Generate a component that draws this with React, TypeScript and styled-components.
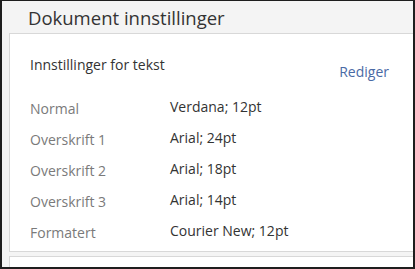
import React from "react";
import styled, { createGlobalStyle } from "styled-components";

const GlobalStyle = createGlobalStyle`
  html, body {
    margin: 0;
    padding: 0;
    background: #ffffff;
  }
  body {
    font-family: "Open Sans", "Noto Sans", sans-serif;
  }
`;

const Frame = styled.div`
  box-sizing: border-box;
  width: 415px;
  height: 269px;
  border: 2px solid #1e1e1e;
  border-top-width: 1px;
  background: #f4f4f4;
  overflow: hidden;
  display: flex;
  flex-direction: column;
`;

const Title = styled.h1`
  margin: 0;
  height: 32px;
  padding-left: 26px;
  font-size: 18.5px;
  font-weight: 400;
  line-height: 33px;
  color: #333333;
  box-sizing: border-box;
`;

const Card = styled.section`
  margin-left: 7px;
  margin-right: -4px;
  background: #ffffff;
  border: 1px solid #d8d8d8;
  padding: 21px 0 0 20px;
  display: flex;
  flex-direction: column;
`;

const SettingsCard = styled(Card)`
  height: 219px;
  box-sizing: border-box;
`;

const NextCard = styled(Card)`
  margin-top: 4px;
  flex: 1;
`;

const CardHead = styled.div`
  display: flex;
  justify-content: space-between;
  padding-right: 27px;
`;

const CardTitle = styled.h2`
  margin: 0;
  font-size: 14px;
  font-weight: 400;
  line-height: 20px;
  color: #333333;
`;

const EditLink = styled.a`
  margin-top: 7px;
  font-size: 14px;
  line-height: 20px;
  color: #4a6aa5;
  text-decoration: none;
  cursor: pointer;
`;

const Rows = styled.dl`
  margin: 15px 0 0;
  display: grid;
  grid-template-columns: 140px 1fr;
  grid-auto-rows: 31px;
`;

const Label = styled.dt`
  margin: 0;
  font-size: 14px;
  line-height: 20px;
  padding-top: 2px;
  color: #7a7a7a;
`;

const Value = styled.dd`
  margin: 0;
  font-size: 14px;
  line-height: 20px;
  color: #333333;
`;

const rows: [string, string][] = [
  ["Normal", "Verdana; 12pt"],
  ["Overskrift 1", "Arial; 24pt"],
  ["Overskrift 2", "Arial; 18pt"],
  ["Overskrift 3", "Arial; 14pt"],
  ["Formatert", "Courier New; 12pt"],
];

export default function App() {
  return (
    <>
      <GlobalStyle />
      <Frame>
        <Title>Dokument innstillinger</Title>
        <SettingsCard>
          <CardHead>
            <CardTitle>Innstillinger for tekst</CardTitle>
            <EditLink>Rediger</EditLink>
          </CardHead>
          <Rows>
            {rows.map(([label, value]) => (
              <React.Fragment key={label}>
                <Label>{label}</Label>
                <Value>{value}</Value>
              </React.Fragment>
            ))}
          </Rows>
        </SettingsCard>
        <NextCard />
      </Frame>
    </>
  );
}
